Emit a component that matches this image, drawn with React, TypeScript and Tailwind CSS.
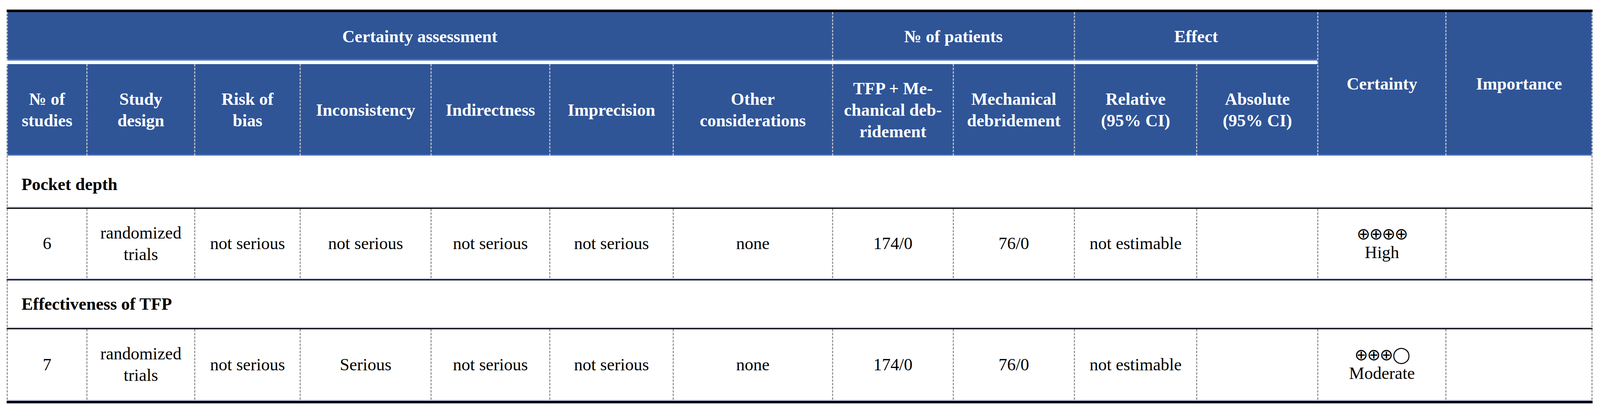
import type { ReactNode } from "react";

// column widths taken from the reference, as shares of the table width
const COLS =
  "grid-cols-[minmax(0,216fr)_minmax(0,292fr)_minmax(0,286fr)_minmax(0,354fr)_minmax(0,322fr)_minmax(0,334fr)_minmax(0,432fr)_minmax(0,327fr)_minmax(0,328fr)_minmax(0,332fr)_minmax(0,328fr)_minmax(0,347fr)_minmax(0,399fr)]";

const head =
  "flex items-center justify-center text-center bg-[#2f5597] text-white font-bold border-l-[3px] border-dashed border-[#b9bcc4]";

function Divider({ bottom = false }: { bottom?: boolean }) {
  return (
    <div>
      <div className="h-[3px] bg-[#c9d1ea]" />
      <div className={bottom ? "h-[6px] bg-black" : "h-[3px] bg-black"} />
      {bottom && <div className="h-px bg-[#9a9a9a]" />}
    </div>
  );
}

function Section({ title, h, pad }: { title: string; h: string; pad: string }) {
  return (
    <div
      className={`flex items-center pl-[0.86%] font-bold border-x-[3px] border-dashed border-[#9a9a9a] ${h} ${pad}`}
    >
      {title}
    </div>
  );
}

function Grade({ marks, label }: { marks: string; label: string }) {
  return (
    <div className="flex flex-col items-center">
      <span className="font-['DejaVu_Sans',sans-serif] text-[41px] leading-[46px] tracking-[-2px]">
        {marks}
      </span>
      <span className="leading-[50px]">{label}</span>
    </div>
  );
}

function DataRow({ cells, h }: { cells: ReactNode[]; h: string }) {
  return (
    <div className={`grid ${COLS} ${h}`}>
      {cells.map((c, i) => (
        <div
          key={i}
          className={`flex items-center justify-center text-center border-l-[3px] border-dashed border-[#9a9a9a] ${
            i === cells.length - 1 ? "border-r-[3px]" : ""
          }`}
        >
          {c}
        </div>
      ))}
    </div>
  );
}

export default function App() {
  const sub: ReactNode[] = [
    <>№ of<br />studies</>,
    <>Study<br />design</>,
    <>Risk of<br />bias</>,
    "Inconsistency",
    "Indirectness",
    "Imprecision",
    <>Other<br />considerations</>,
    <>TFP + Me-<br />chanical deb-<br />ridement</>,
    <>Mechanical<br />debridement</>,
    <>Relative<br />(95% CI)</>,
    <>Absolute<br />(95% CI)</>,
  ];

  const row = (n: string, inc: string, grade: ReactNode): ReactNode[] => [
    n,
    <>randomized<br />trials</>,
    "not serious",
    inc,
    "not serious",
    "not serious",
    "none",
    "174/0",
    "76/0",
    "not estimable",
    "",
    grade,
    "",
  ];

  return (
    <div className="w-full h-[1051px] bg-white pt-[24px] font-['Liberation_Serif',serif] text-[44px] leading-[55px] text-black">
      <div className="ml-[0.415%] w-[99.13%]">
        <div className="h-px bg-[#8a8a8a]" />
        <div className="h-[6px] bg-black" />

        <div className={`grid ${COLS} grid-rows-[124px_9px_234px]`}>
          <div className={`${head} col-start-1 col-span-7 row-start-1 shadow-[inset_0_-4px_0_#4a78c8]`}>
            Certainty assessment
          </div>
          <div className={`${head} col-start-8 col-span-2 row-start-1 shadow-[inset_0_-4px_0_#4a78c8]`}>
            № of patients
          </div>
          <div className={`${head} col-start-10 col-span-2 row-start-1 shadow-[inset_0_-4px_0_#4a78c8]`}>
            Effect
          </div>
          <div className={`${head} col-start-12 row-start-1 row-span-3 shadow-[inset_0_-3px_0_#4a78c8]`}>
            Certainty
          </div>
          <div
            className={`${head} col-start-13 row-start-1 row-span-3 border-r-[3px] shadow-[inset_0_-3px_0_#4a78c8]`}
          >
            Importance
          </div>
          {sub.map((s, i) => (
            <div
              key={i}
              className={`${head} row-start-3 shadow-[inset_0_-3px_0_#4a78c8]`}
              style={{ gridColumnStart: i + 1 }}
            >
              <span>{s}</span>
            </div>
          ))}
        </div>

        <Section title="Pocket depth" h="h-[130px]" pad="pt-[16px]" />
        <Divider />
        <DataRow h="h-[177px]" cells={row("6", "not serious", <Grade marks="⊕⊕⊕⊕" label="High" />)} />
        <Divider />
        <Section title="Effectiveness of TFP" h="h-[119px]" pad="pt-[2px]" />
        <Divider />
        <DataRow h="h-[180px]" cells={row("7", "Serious", <Grade marks="⊕⊕⊕◯" label="Moderate" />)} />
        <Divider bottom />
      </div>
    </div>
  );
}
